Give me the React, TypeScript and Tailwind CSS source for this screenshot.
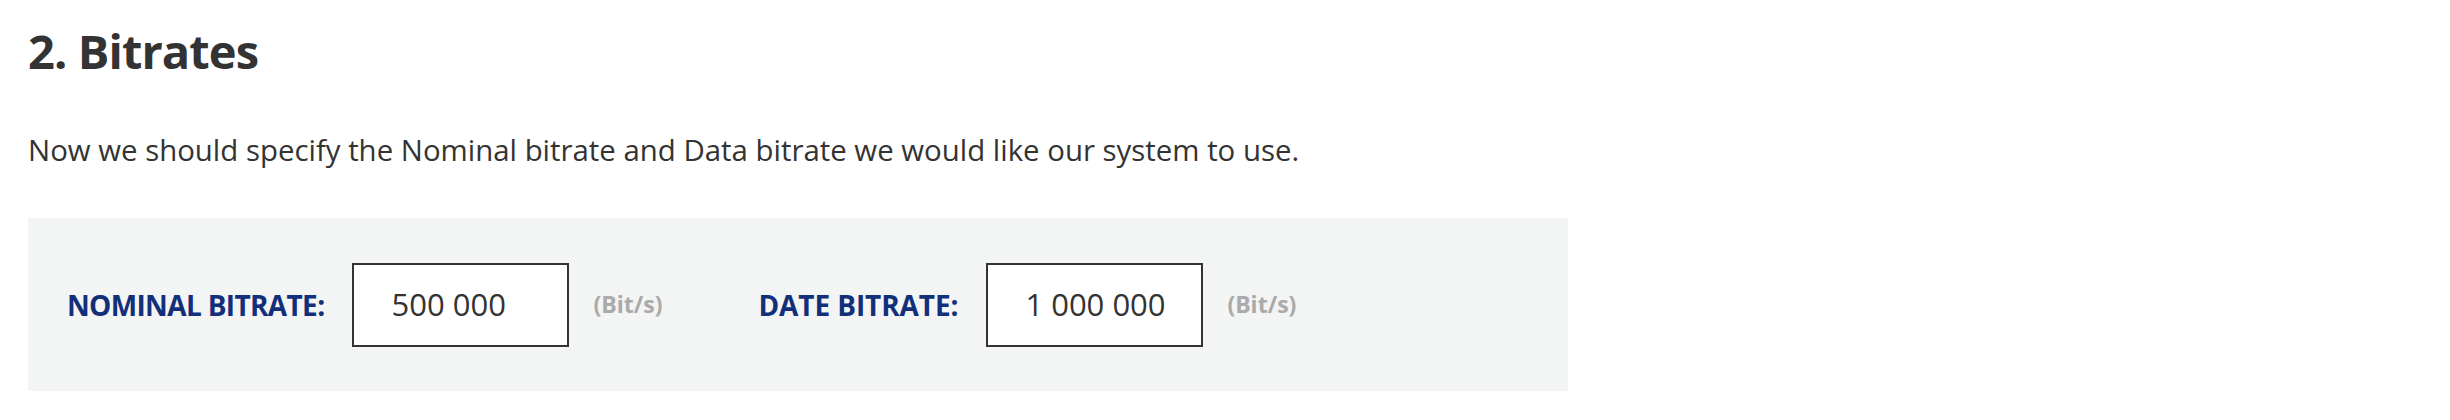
const FONT = "font-['Open_Sans',_'Noto_Sans',_sans-serif]"

function RateField({ label, value, tracking }: { label: string; value: string; tracking: string }) {
  return (
    <div className="flex items-center">
      <span className={`text-[28px] leading-none font-bold text-[#12307a] ${tracking}`}>{label}</span>
      <div className="ml-[28px] flex h-[84px] w-[217px] items-center border-2 border-[#333] bg-white pl-[37px] text-[31px] text-[#333]">
        {value}
      </div>
      <span className="ml-[24px] text-[23px] font-bold text-[#aaa]">(Bit/s)</span>
    </div>
  )
}

export default function App() {
  return (
    <div className={`${FONT} min-h-[420px] bg-white px-[28px] pt-[18px] text-[#333]`}>
      <h2 className="text-[47px] leading-[66px] font-bold tracking-[-0.9px] text-[#333]">2. Bitrates</h2>
      <p className="mt-[47px] text-[29.4px] leading-[38px]">
        Now we should specify the Nominal bitrate and Data bitrate we would like our system to use.
      </p>
      <div className="mt-[49px] flex h-[173px] w-[1540px] items-center gap-[96px] bg-[#f3f4f4] px-[39px]">
        <RateField label="NOMINAL BITRATE:" value="500 000" tracking="tracking-[-0.65px]" />
        <RateField label="DATE BITRATE:" value="1 000 000" tracking="tracking-[-0.1px]" />
      </div>
    </div>
  )
}
